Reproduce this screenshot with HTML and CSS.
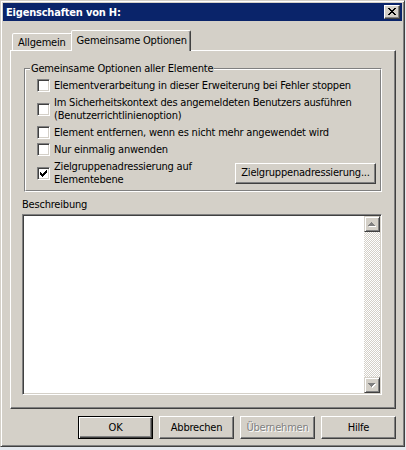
FILE: index.html
```html
<!DOCTYPE html>
<html lang="de">
<head>
<meta charset="utf-8">
<title>Eigenschaften von H:</title>
<link rel="stylesheet" href="styles.css">
</head>
<body>
<div class="window">
  <div class="titlebar">
    <span class="title">Eigenschaften von H:</span>
    <span class="close"><svg width="8" height="7" viewBox="0 0 8 7"><path d="M0 0h2v1h-2zM6 0h2v1h-2zM1 1h2v1h-2zM5 1h2v1h-2zM2 2h4v1h-4zM3 3h2v1h-2zM2 4h4v1h-4zM1 5h2v1h-2zM5 5h2v1h-2zM0 6h2v1h-2zM6 6h2v1h-2z" fill="#000"/></svg></span>
  </div>
  <div class="client">
    <div class="tabs">
      <div class="tab">Allgemein</div>
      <div class="tab active">Gemeinsame Optionen</div>
    </div>
    <div class="panel">
      <div class="group">
        <div class="group-inner">
          <div class="legend">Gemeinsame Optionen aller Elemente</div>
          <div class="row"><span class="cb"></span><span class="txt">Elementverarbeitung in dieser Erweiterung bei Fehler stoppen</span></div>
          <div class="row two"><span class="cb"></span><span class="txt">Im Sicherheitskontext des angemeldeten Benutzers ausführen<br>(Benutzerrichtlinienoption)</span></div>
          <div class="row"><span class="cb"></span><span class="txt">Element entfernen, wenn es nicht mehr angewendet wird</span></div>
          <div class="row"><span class="cb"></span><span class="txt">Nur einmalig anwenden</span></div>
          <div class="row two"><span class="cb checked"><svg width="7" height="7" viewBox="0 0 7 7"><path d="M6 0h1v1h-1zM5 1h2v1h-2zM0 2h1v1h-1zM4 2h3v1h-3zM0 3h2v1h-2zM3 3h3v1h-3zM0 4h5v1h-5zM1 5h3v1h-3zM2 6h1v1h-1z" fill="#000"/></svg></span><span class="txt">Zielgruppenadressierung auf<br>Elementebene</span><span class="btn wide">Zielgruppenadressierung...</span></div>
        </div>
      </div>
      <div class="label">Beschreibung</div>
      <div class="field">
        <div class="field-text"></div>
        <div class="scrollbar">
          <span class="sb-btn"><svg width="8" height="5" viewBox="0 0 8 5"><path d="M4 1h1v1h-1zM3 2h3v1h-3zM2 3h5v1h-5zM1 4h7v1h-7z" fill="#fff"/><path d="M3 0h1v1h-1zM2 1h3v1h-3zM1 2h5v1h-5zM0 3h7v1h-7z" fill="#808080"/></svg></span>
          <span class="sb-track"></span>
          <span class="sb-btn"><svg width="8" height="5" viewBox="0 0 8 5"><path d="M1 1h7v1h-7zM2 2h5v1h-5zM3 3h3v1h-3zM4 4h1v1h-1z" fill="#fff"/><path d="M0 0h7v1h-7zM1 1h5v1h-5zM2 2h3v1h-3zM3 3h1v1h-1z" fill="#808080"/></svg></span>
        </div>
      </div>
    </div>
    <div class="buttons">
      <span class="btn default">OK</span>
      <span class="btn">Abbrechen</span>
      <span class="btn disabled">Übernehmen</span>
      <span class="btn">Hilfe</span>
    </div>
  </div>
</div>
</body>
</html>
```

FILE: styles.css
```css
* { box-sizing: border-box; }

html, body {
  margin: 0;
  padding: 0;
  background: #e4e8ee;
}

body {
  font-family: "DejaVu Sans Condensed", "DejaVu Sans", sans-serif;
  font-stretch: condensed;
  font-size: 11px;
  line-height: 13px;
  letter-spacing: -0.2px;
  color: #000;
}

.window {
  width: 405px;
  height: 447px;
  background: #d4d0c8;
  border: 1px solid;
  border-color: #d4d0c8 #404040 #404040 #d4d0c8;
  box-shadow: inset 1px 1px 0 #fff, inset -1px -1px 0 #808080;
  padding: 2px;
  display: flex;
  flex-direction: column;
}

.titlebar {
  height: 18px;
  background: #0a246a;
  display: flex;
  align-items: center;
  padding: 0 2px 0 3px;
}

.title {
  flex: 1;
  color: #fff;
  font-weight: bold;
  white-space: nowrap;
}

.close {
  width: 16px;
  height: 14px;
  background: #d4d0c8;
  border: 1px solid;
  border-color: #fff #404040 #404040 #fff;
  box-shadow: inset -1px -1px 0 #808080;
  display: flex;
  align-items: center;
  justify-content: center;
  padding: 0 1px 1px 0;
}

.close svg { display: block; }

.client {
  flex: 1;
  display: flex;
  flex-direction: column;
  padding: 9px 6px 5px 7px;
}

.tabs {
  display: flex;
  align-items: flex-end;
  height: 20px;
  padding-left: 2px;
}

.tab {
  height: 17px;
  padding: 2px 6px 0 5px;
  border: 1px solid;
  border-bottom: 0;
  border-color: #fff #404040 transparent #fff;
  border-radius: 2px 2px 0 0;
  box-shadow: inset -1px 0 0 #808080;
  white-space: nowrap;
  background: #d4d0c8;
}

.tab.active {
  position: relative;
  z-index: 1;
  height: 21px;
  margin: 0 -2px -1px -2px;
  padding: 3px 3px 0 5px;
}

.panel {
  flex: 1;
  display: flex;
  flex-direction: column;
  border: 1px solid;
  border-color: #fff #404040 #404040 #fff;
  box-shadow: inset -1px -1px 0 #808080;
  padding: 17px 13px 13px 11px;
}

.group {
  margin-left: 2px;
  border: 1px solid;
  border-color: #808080 #fff #fff #808080;
}

.group-inner {
  border: 1px solid;
  border-color: #fff #808080 #808080 #fff;
  padding: 0 4px 4px 11px;
  display: flex;
  flex-direction: column;
  gap: 4px;
}

.legend {
  align-self: flex-start;
  margin: -8px 0 0 -7px;
  padding: 0 1px;
  background: #d4d0c8;
  white-space: nowrap;
}

.row {
  display: flex;
  align-items: center;
  gap: 4px;
  min-height: 13px;
}

.row.two { min-height: 26px; }

.txt {
  white-space: nowrap;
  flex: 1;
}

.cb {
  flex: none;
  width: 13px;
  height: 13px;
  background: #fff;
  border: 1px solid;
  border-color: #808080 #fff #fff #808080;
  box-shadow: inset 1px 1px 0 #404040, inset -1px -1px 0 #d4d0c8;
  padding: 2px;
}

.cb svg { display: block; }

.btn {
  width: 75px;
  height: 23px;
  display: flex;
  align-items: center;
  justify-content: center;
  background: #d4d0c8;
  border: 1px solid;
  border-color: #fff #404040 #404040 #fff;
  box-shadow: inset -1px -1px 0 #808080;
  white-space: nowrap;
  padding-bottom: 1px;
}

.btn.wide {
  flex: none;
  width: 141px;
  height: 21px;
}

.btn.default {
  border-color: #000;
  box-shadow: inset 1px 1px 0 #fff, inset -1px -1px 0 #404040, inset -2px -2px 0 #808080;
}

.btn.disabled {
  color: #808080;
  text-shadow: 1px 1px 0 #fff;
}

.label {
  margin: 6px 0 3px;
}

.field {
  flex: 1;
  display: flex;
  background: #fff;
  border: 1px solid;
  border-color: #808080 #fff #fff #808080;
  box-shadow: inset 1px 1px 0 #404040, inset -1px -1px 0 #d4d0c8;
  padding: 1px;
}

.field-text { flex: 1; }

.scrollbar {
  width: 16px;
  display: flex;
  flex-direction: column;
}

.sb-btn {
  height: 16px;
  display: flex;
  align-items: center;
  justify-content: center;
  background: #d4d0c8;
  border: 1px solid;
  border-color: #d4d0c8 #404040 #404040 #d4d0c8;
  box-shadow: inset 1px 1px 0 #fff, inset -1px -1px 0 #808080;
}

.sb-btn svg { display: block; }

.sb-track {
  flex: 1;
  background-color: #fff;
  background-image: conic-gradient(#d4d0c8 25%, #fff 0 50%, #d4d0c8 0 75%, #fff 0);
  background-size: 2px 2px;
}

.buttons {
  margin-top: 7px;
  display: flex;
  justify-content: flex-end;
  gap: 6px;
}
```
